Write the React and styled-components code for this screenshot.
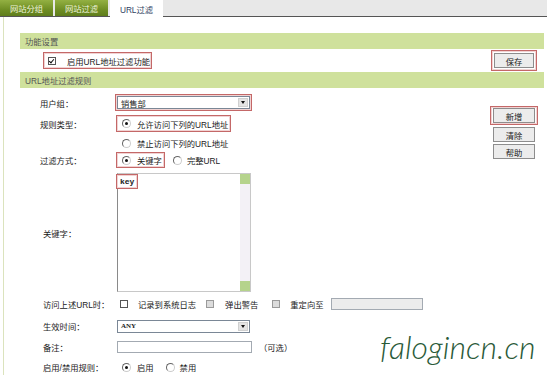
import React from 'react'
import styled, { createGlobalStyle } from 'styled-components'

const GlobalStyle = createGlobalStyle`
  body {
    margin: 0;
    background: #fff;
    font-family: "Liberation Sans", "Noto Sans CJK SC", sans-serif;
    font-size: 8.3px;
    color: #222;
  }
`

const App = () => {
  return (
    <Page>
      <GlobalStyle />
      <TabBar>
        <Tab>网站分组</Tab>
        <Tab>网站过滤</Tab>
        <Tab $active>URL过滤</Tab>
      </TabBar>

      <Body>
        <SectionBar>功能设置</SectionBar>
        <ToggleRow>
          <Mark $pad="0 1px 0 4px" $h={17}>
            <Checkbox $checked />
            <Text $ml={11}>启用URL地址过滤功能</Text>
          </Mark>
          <Mark $pad="2px">
            <Button $w={40}>保存</Button>
          </Mark>
        </ToggleRow>

        <SectionBar>URL地址过滤规则</SectionBar>
        <RulesArea>
          <Form>
            <Row $mt={6}>
              <Label>用户组：</Label>
              <Controls>
                <Mark $pad="1px" $ml={-2}>
                  <Select>
                    销售部
                    <Arrow />
                  </Select>
                </Mark>
              </Controls>
            </Row>

            <Row $mt={5}>
              <Label>规则类型：</Label>
              <Controls>
                <Mark $pad="0 2px 0 5px" $ml={-1} $h={17}>
                  <Radio $checked />
                  <Text $ml={6}>允许访问下列的URL地址</Text>
                </Mark>
              </Controls>
            </Row>

            <Row $mt={4}>
              <Label />
              <Controls $pl={5}>
                <Radio />
                <Text $ml={6}>禁止访问下列的URL地址</Text>
              </Controls>
            </Row>

            <Row $mt={1}>
              <Label>过滤方式：</Label>
              <Controls>
                <Mark $pad="0 2px 0 5px" $ml={-1} $h={16}>
                  <Radio $checked />
                  <Text $ml={6}>关键字</Text>
                </Mark>
                <Radio $ml={8} />
                <Text $ml={5}>完整URL</Text>
              </Controls>
            </Row>

            <Row $mt={5} $h={119}>
              <Label $pl={23}>关键字：</Label>
              <TextArea>
                <TextContent>
                  <Mark $pad="0 3px" $ml={-2} $h={15}>
                    <KeyText>key</KeyText>
                  </Mark>
                </TextContent>
                <ScrollTrack>
                  <ScrollButton />
                  <ScrollButton />
                </ScrollTrack>
              </TextArea>
            </Row>

            <Row $mt={4}>
              <Label $pl={23}>访问上述URL时：</Label>
              <Controls $pl={3}>
                <Checkbox />
                <Text $ml={10}>记录到系统日志</Text>
                <Checkbox $disabled $ml={10} />
                <Text $ml={11}>弹出警告</Text>
                <Checkbox $disabled $ml={14} />
                <Text $ml={10}>重定向至</Text>
                <Input $w={92} $disabled $ml={7} />
              </Controls>
            </Row>

            <Row $mt={6}>
              <Label $pl={23}>生效时间：</Label>
              <Controls>
                <Select $bold>
                  ANY
                  <Arrow />
                </Select>
              </Controls>
            </Row>

            <Row $mt={5}>
              <Label $pl={23}>备注：</Label>
              <Controls>
                <Input $w={135} />
                <Text $ml={7}>（可选）</Text>
              </Controls>
            </Row>

            <Row $mt={4}>
              <Label $pl={23}>启用/禁用规则：</Label>
              <Controls $pl={5}>
                <Radio $checked />
                <Text $ml={6}>启用</Text>
                <Radio $ml={12} />
                <Text $ml={5}>禁用</Text>
              </Controls>
            </Row>
          </Form>

          <SideCol>
            <Mark $pad="1px 2px">
              <Button $w={42}>新增</Button>
            </Mark>
            <Button $w={42}>清除</Button>
            <Button $w={42}>帮助</Button>
          </SideCol>
        </RulesArea>
      </Body>

      <Watermark>falogincn.cn</Watermark>
    </Page>
  )
}

const Page = styled.div`
  position: relative;
  width: 547px;
  height: 375px;
  overflow: hidden;
`
const TabBar = styled.div`
  display: flex;
  gap: 2px;
  height: 16px;
  background: #e8e8e8;
  border-bottom: 1px solid #555;
`
const Tab = styled.div`
  width: 53px;
  height: ${p => (p.$active ? '17px' : '16px')};
  display: flex;
  align-items: center;
  justify-content: center;
  color: ${p => (p.$active ? '#2f3f5f' : '#eef3dc')};
  background: ${p => (p.$active ? '#fff' : 'linear-gradient(#93b042, #6f8e24 60%, #5f7d1b)')};
`
const Body = styled.div`
  margin-left: 3px;
  border-left: 1px solid #dbe3bd;
  padding: 16px 3px 0 16px;
  height: 342px;
`
const SectionBar = styled.div`
  height: 16px;
  display: flex;
  align-items: center;
  padding-left: 5px;
  background: #cfe19c;
  color: #555;
`
const ToggleRow = styled.div`
  height: 23px;
  display: flex;
  align-items: center;
  justify-content: space-between;
  padding: 0 7px 0 23px;
`
const Mark = styled.div`
  display: inline-flex;
  align-items: center;
  box-sizing: border-box;
  ${p => (p.$h ? `height: ${p.$h}px;` : '')}
  padding: ${p => p.$pad || '1px'};
  margin-left: ${p => p.$ml || 0}px;
  border: 1px solid #c46868;
  box-shadow: inset 0 0 0 1px #f1d3d3;
`
const Text = styled.span`
  margin-left: ${p => p.$ml || 0}px;
  white-space: nowrap;
`
const Button = styled.div`
  box-sizing: border-box;
  width: ${p => p.$w}px;
  height: 15px;
  display: flex;
  align-items: center;
  justify-content: center;
  border: 1px solid #8d8d8d;
  background: #ececec;
  color: #222;
`
const Checkbox = styled.span`
  box-sizing: border-box;
  width: 8px;
  height: 8px;
  flex: none;
  margin-left: ${p => p.$ml || 0}px;
  border: 1px solid ${p => (p.$disabled ? '#9a9a9a' : '#555')};
  background: ${p => (p.$disabled ? '#dcdcdc' : '#fff')};
  position: relative;
  &::after {
    content: '';
    display: ${p => (p.$checked ? 'block' : 'none')};
    position: absolute;
    left: 1px;
    top: 0px;
    width: 2px;
    height: 4px;
    border: solid #111;
    border-width: 0 1.5px 1.5px 0;
    transform: rotate(40deg);
  }
`
const Radio = styled.span`
  box-sizing: border-box;
  width: 9px;
  height: 9px;
  flex: none;
  margin-left: ${p => p.$ml || 0}px;
  border-radius: 50%;
  border: 1px solid;
  border-color: #666 #ccc #ccc #666;
  background: #fff;
  display: flex;
  align-items: center;
  justify-content: center;
  &::after {
    content: '';
    display: ${p => (p.$checked ? 'block' : 'none')};
    width: 3px;
    height: 3px;
    border-radius: 50%;
    background: #111;
  }
`
const RulesArea = styled.div`
  display: flex;
  justify-content: space-between;
`
const Form = styled.div`
  flex: 1;
  display: flex;
  flex-direction: column;
`
const Row = styled.div`
  display: grid;
  grid-template-columns: 97px 1fr;
  align-items: center;
  height: ${p => p.$h || 16}px;
  margin-top: ${p => p.$mt || 0}px;
`
const Label = styled.div`
  padding-left: ${p => p.$pl || 20}px;
  white-space: nowrap;
`
const Controls = styled.div`
  display: flex;
  align-items: center;
  padding-left: ${p => p.$pl || 0}px;
`
const Select = styled.div`
  box-sizing: border-box;
  width: 133px;
  height: 13px;
  display: flex;
  align-items: center;
  justify-content: space-between;
  padding: 0 1px 0 3px;
  border: 1px solid #7a8796;
  background: #fff;
  font-weight: ${p => (p.$bold ? 'bold' : 'normal')};
  font-size: ${p => (p.$bold ? '7px' : 'inherit')};
  font-family: ${p => (p.$bold ? '"Liberation Serif", serif' : 'inherit')};
`
const Arrow = styled.span`
  width: 10px;
  height: 9px;
  background: #e4e4e4;
  border: 1px solid #d0d0d0;
  box-sizing: border-box;
  display: flex;
  align-items: center;
  justify-content: center;
  &::after {
    content: '';
    border-left: 2.5px solid transparent;
    border-right: 2.5px solid transparent;
    border-top: 3px solid #111;
  }
`
const TextArea = styled.div`
  box-sizing: border-box;
  width: 134px;
  height: 119px;
  display: flex;
  border: 1px solid #c8c8c8;
  border-left-color: #8a8a8a;
  background: #fff;
`
const TextContent = styled.div`
  flex: 1;
  display: flex;
  align-items: flex-start;
`
const KeyText = styled.span`
  font-family: "Liberation Mono", monospace;
  font-weight: bold;
  font-size: 8px;
`
const ScrollTrack = styled.div`
  width: 10px;
  display: flex;
  flex-direction: column;
  justify-content: space-between;
  background: #f3f1f6;
`
const ScrollButton = styled.span`
  height: 10px;
  background: #b5d38c;
`
const Input = styled.span`
  box-sizing: border-box;
  width: ${p => p.$w}px;
  height: 12px;
  margin-left: ${p => p.$ml || 0}px;
  border: 1px solid #a3aab2;
  background: ${p => (p.$disabled ? '#ececec' : '#fff')};
`
const SideCol = styled.div`
  width: 48px;
  margin-right: 6px;
  padding-top: 18px;
  display: flex;
  flex-direction: column;
  align-items: center;
  gap: 2px;
`
const Watermark = styled.div`
  position: absolute;
  left: 380px;
  top: 331px;
  font-family: Lato, sans-serif;
  font-weight: 300;
  font-style: italic;
  font-size: 32px;
  line-height: 1;
  color: #2a5a38;
`

export default App
